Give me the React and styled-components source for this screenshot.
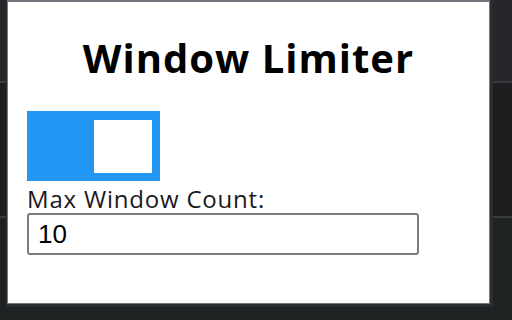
import React, { useState } from "react";
import styled, { createGlobalStyle } from "styled-components";

const GlobalStyle = createGlobalStyle`
  html, body {
    margin: 0;
    width: 512px;
    height: 320px;
    overflow: hidden;
  }
  body {
    background: linear-gradient(
      to bottom,
      #27262b 0 81px,
      #3a393e 81px 83px,
      #1c1d1f 83px 216px,
      #393b3d 216px 218px,
      #1f2223 218px
    );
  }
`;

const Page = styled.div`
  padding-left: 7px;
`;

const Popup = styled.div`
  width: 483px;
  height: 304px;
  padding: 0 19px;
  box-sizing: border-box;
  background: #fff;
  border: 1px solid #77767f;
  border-top-width: 2px;
  box-shadow: 1px 1px 0 2px #2c2c31;
`;

const Title = styled.h1`
  margin: 0;
  padding-top: 32px;
  height: 78px;
  box-sizing: border-box;
  text-align: center;
  font-family: "Open Sans", "Noto Sans", sans-serif;
  font-weight: 700;
  font-size: 40px;
  letter-spacing: 1px;
  line-height: 48px;
  color: #000;
`;

const Toggle = styled.button`
  display: flex;
  justify-content: ${(p) => (p.$on ? "flex-end" : "flex-start")};
  align-items: center;
  width: 133px;
  height: 70px;
  margin-top: 31px;
  padding: 8px;
  border: 0;
  border-radius: 0;
  background: ${(p) => (p.$on ? "#2196f3" : "#ccc")};
  cursor: pointer;
  box-sizing: border-box;
`;

const Knob = styled.span`
  display: block;
  width: 58px;
  height: 53px;
  background: #fff;
`;

const Label = styled.label`
  display: block;
  margin-top: 4px;
  font-family: "Open Sans", "Noto Sans", sans-serif;
  font-size: 24px;
  letter-spacing: 0.8px;
  line-height: 28px;
  color: #1a1a1a;
`;

const CountInput = styled.input`
  display: block;
  width: 392px;
  height: 42px;
  margin: 0;
  padding: 0 9px;
  box-sizing: border-box;
  border: 2px solid #7c7c7c;
  border-radius: 3px;
  font-family: "Liberation Sans", Arial, sans-serif;
  font-size: 26px;
  color: #000;
  background: #fff;
  outline: none;
`;

export default function App() {
  const [on, setOn] = useState(true);
  const [count, setCount] = useState("10");
  return (
    <>
      <GlobalStyle />
      <Page>
        <Popup>
          <Title>Window Limiter</Title>
          <Toggle $on={on} onClick={() => setOn(!on)} aria-label="Enable limiter">
            <Knob />
          </Toggle>
          <Label htmlFor="max-count">Max Window Count:</Label>
          <CountInput
            id="max-count"
            type="text"
            value={count}
            onChange={(e) => setCount(e.target.value)}
          />
        </Popup>
      </Page>
    </>
  );
}
